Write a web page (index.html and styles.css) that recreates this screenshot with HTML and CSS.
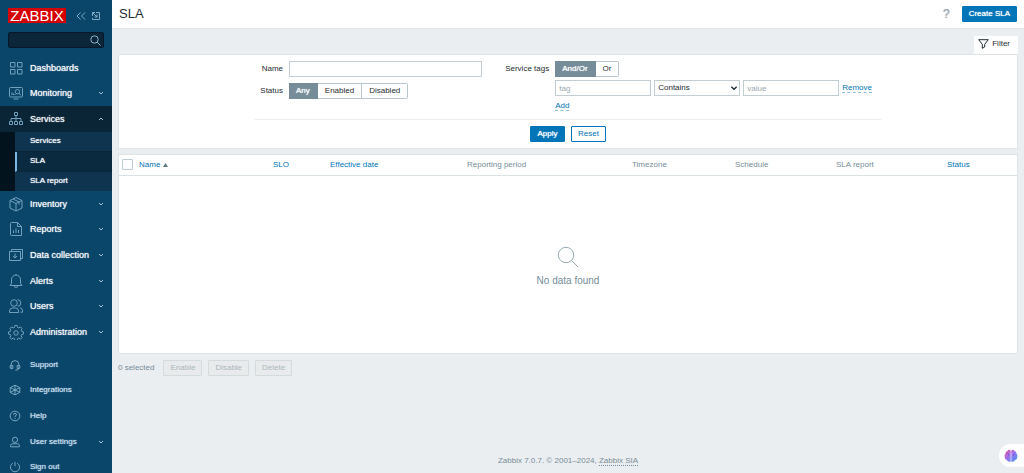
FILE: index.html
```html
<!DOCTYPE html>
<html lang="en">
<head>
<meta charset="utf-8">
<title>SLA</title>
<link rel="stylesheet" href="styles.css">
</head>
<body>
<svg class="sprite" aria-hidden="true">
  <symbol id="chevron" viewBox="0 0 6 6"><path d="M1 2l2 2 2-2"/></symbol>
</svg>
<div class="layout">
  <aside class="sidebar">
    <div class="brand">
      <a class="logo" href="#">ZABBIX</a>
      <button class="icon-btn" type="button" aria-label="Collapse sidebar"><svg width="10" height="10" viewBox="0 0 10 10"><path d="M4.500 1.500L1 5l3.500 3.500M9 1.500L5.500 5 9 8.500"/></svg></button>
      <button class="icon-btn" type="button" aria-label="Hide sidebar"><svg width="10" height="10" viewBox="0 0 10 10"><path d="M5 1.500h3.500v7h-7V7M1.500 5V1.500H4M1.500 1.500L6 6M6 3.500V6H3.500"/></svg></button>
    </div>
    <form class="search">
      <input type="text" aria-label="Search">
      <button class="search-btn" type="button" aria-label="Search"><svg width="11" height="11" viewBox="0 0 11 11"><circle cx="4.500" cy="4.500" r="3.700"/><path d="M7.200 7.200l3.300 3.300"/></svg></button>
    </form>
    <nav>
      <ul class="menu menu-top">
        <li><a href="#"><svg class="icon" viewBox="0 0 16 16"><path d="M2.500 2.500h4.500v4.500H2.500zM9.500 2.500H14v4.500H9.500zM2.500 9.500h4.500V14H2.500zM9.500 9.500H14V14H9.500z"/></svg><span>Dashboards</span></a></li>
        <li><a href="#"><svg class="icon" viewBox="0 0 16 16"><path d="M2.500 2.500h11q1 0 1 1v7.500q0 1-1 1h-11q-1 0-1-1V3.500q0-1 1-1zM5.500 14h5M4 10V7.500M5.500 10V8.500M7 10V9"/><circle cx="9.500" cy="6.700" r="2.200"/><path d="M11 8.500l2 1.700"/></svg><span>Monitoring</span><svg class="arrow"><use href="#chevron"/></svg></a></li>
        <li class="open"><a href="#"><svg class="icon" viewBox="0 0 16 16"><path d="M6.500 1.500h3v3h-3zM8 4.500v6M3 10.500V7.500h10v3M1.500 10.500h3v3h-3zM6.500 10.500h3v3h-3zM11.500 10.500h3v3h-3z"/></svg><span>Services</span><svg class="arrow up"><use href="#chevron"/></svg></a></li>
      </ul>
      <ul class="submenu">
        <li><a href="#">Services</a></li>
        <li class="selected"><a href="#">SLA</a></li>
        <li><a href="#">SLA report</a></li>
      </ul>
      <ul class="menu menu-main">
        <li><a href="#"><svg class="icon" viewBox="0 0 16 16"><path d="M8 1.500l6 3v7.500l-6 3-6-3V4.500zM2 4.500l6 3 6-3M8 7.500V15M5 3l6 3v2.500"/></svg><span>Inventory</span><svg class="arrow"><use href="#chevron"/></svg></a></li>
        <li><a href="#"><svg class="icon" viewBox="0 0 16 16"><path d="M3.500 1.500h6l4 4V14.500h-10q-1 0-1-1V2.500q0-1 1-1zM9.500 1.500v4h4M5.500 12V9.500M8 12V7.500M10.500 12V9"/></svg><span>Reports</span><svg class="arrow"><use href="#chevron"/></svg></a></li>
        <li><a href="#"><svg class="icon" viewBox="0 0 16 16"><path d="M1.500 4.500h11v9h-11zM3.500 4.500V2.500h11v9h-2M7 6.500v4.500M5 9l2 2 2-2"/></svg><span>Data collection</span><svg class="arrow"><use href="#chevron"/></svg></a></li>
        <li><a href="#"><svg class="icon" viewBox="0 0 16 16"><path d="M2 12.500l1.500-2V6.500a4.500 4.500 0 0 1 9 0v4l1.500 2zM6 12.500q.3 2 2 2t2-2M8 2V1"/></svg><span>Alerts</span><svg class="arrow"><use href="#chevron"/></svg></a></li>
        <li><a href="#"><svg class="icon" viewBox="0 0 16 16"><circle cx="6" cy="5" r="3.300"/><path d="M1.500 14.500v-1.500q0-3 3-3h3q3 0 3 3v1.500zM9.500 1.700a3.300 3.300 0 0 1 0 6.600M12 9.700q2.500.3 2.500 3v1.500h-2"/></svg><span>Users</span><svg class="arrow"><use href="#chevron"/></svg></a></li>
        <li><a href="#"><svg class="icon" viewBox="0 0 16 16"><path d="M6.900 1.500h2.200l.5 1.900 1.200.5 1.700-1 1.600 1.600-1 1.700.5 1.200 1.900.5v2.200l-1.900.5-.5 1.200 1 1.700-1.600 1.600-1.700-1-1.200.5-.5 1.900H6.900l-.5-1.900-1.200-.5-1.700 1-1.600-1.600 1-1.700-.5-1.200L.5 10.100V7.900l1.900-.5.5-1.200-1-1.700 1.600-1.600 1.700 1 1.200-.5z"/><circle cx="8" cy="9" r="2.200"/></svg><span>Administration</span><svg class="arrow"><use href="#chevron"/></svg></a></li>
      </ul>
      <ul class="menu menu-user">
        <li><a href="#"><svg class="icon" viewBox="0 0 16 16"><path d="M3.500 12V7.500a4.500 4.500 0 0 1 9 0V12M3.500 8.500h2V12h-2q-1 0-1-1V9.500q0-1 1-1M12.500 8.500h-2V12h2q1 0 1-1V9.500q0-1-1-1M12 12q0 2-3.500 2"/></svg><span>Support</span></a></li>
        <li><a href="#"><svg class="icon" viewBox="0 0 16 16"><path d="M8 2.500l5.500 2.800v5.400L8 13.500l-5.500-2.800V5.300zM2.500 5.300L8 8l5.500-2.700M8 8v5.500M8 2.500V8M2.500 10.700L8 8l5.500 2.700"/></svg><span>Integrations</span></a></li>
        <li><a href="#"><svg class="icon" viewBox="0 0 16 16"><circle cx="8" cy="8" r="5.500"/><path d="M6.300 6.700q0-1.700 1.700-1.700t1.700 1.500Q9.700 7.500 8 8.300v1M8 10.300v1.200"/></svg><span>Help</span></a></li>
        <li><a href="#"><svg class="icon" viewBox="0 0 16 16"><circle cx="8" cy="5.500" r="3"/><path d="M3 13.500V12q0-2 2.500-2h5q2.500 0 2.500 2v1.500z"/></svg><span>User settings</span><svg class="arrow"><use href="#chevron"/></svg></a></li>
        <li><a href="#"><svg class="icon" viewBox="0 0 16 16"><path d="M8 2v5M5.500 3.700a5.200 5.200 0 1 0 5 0"/></svg><span>Sign out</span></a></li>
      </ul>
    </nav>
  </aside>
  <div class="page">
    <header class="header">
      <h1>SLA</h1>
      <a class="help" href="#" aria-label="Help">?</a>
      <button class="btn primary" type="button">Create SLA</button>
    </header>
    <main>
      <div class="tabs">
        <a class="filter-tab" href="#"><svg width="11" height="10" viewBox="0 0 11 10"><path d="M.7.7h9.600L6.700 5.300V8L4.300 9.300v-4z"/></svg>Filter</a>
      </div>
      <form class="panel filter">
        <div class="fields">
          <div class="fields-left">
            <label for="name">Name</label>
            <input class="text" id="name" type="text">
            <span class="label" id="status-label">Status</span>
            <div class="segments" role="group" aria-labelledby="status-label">
              <button type="button" class="on">Any</button><button type="button">Enabled</button><button type="button">Disabled</button>
            </div>
          </div>
          <div class="fields-right">
            <span class="label" id="tags-label">Service tags</span>
            <div class="tags">
              <div class="segments" role="group" aria-labelledby="tags-label">
                <button type="button" class="on">And/Or</button><button type="button">Or</button>
              </div>
              <div class="tag-row">
                <input class="text" type="text" placeholder="tag" aria-label="tag">
                <div class="select">
                  <select aria-label="Operator"><option>Contains</option></select>
                  <svg viewBox="0 0 6 6"><path d="M1 2l2 2 2-2"/></svg>
                </div>
                <input class="text" type="text" placeholder="value" aria-label="value">
                <a class="dotted" href="#">Remove</a>
              </div>
              <a class="dotted add" href="#">Add</a>
            </div>
          </div>
        </div>
        <div class="actions">
          <button class="btn primary" type="button">Apply</button>
          <button class="btn" type="button">Reset</button>
        </div>
      </form>
      <div class="panel list">
        <table>
          <colgroup><col class="c-check"><col class="c-name"><col class="c-slo"><col class="c-date"><col class="c-period"><col class="c-zone"><col class="c-sched"><col class="c-report"><col class="c-status"></colgroup>
          <thead>
            <tr>
              <th class="check"><input type="checkbox" aria-label="Select all"></th>
              <th><a href="#">Name <svg class="sort" viewBox="0 0 5 4"><path d="M0 4l2.500-4L5 4z"/></svg></a></th>
              <th><a href="#">SLO</a></th>
              <th><a href="#">Effective date</a></th>
              <th>Reporting period</th>
              <th>Timezone</th>
              <th>Schedule</th>
              <th>SLA report</th>
              <th><a href="#">Status</a></th>
            </tr>
          </thead>
        </table>
        <div class="empty">
          <svg width="22" height="22" viewBox="0 0 22 22"><circle cx="9" cy="9" r="7.700"/><path d="M14.500 14.500l6.500 6.500"/></svg>
          <p>No data found</p>
        </div>
      </div>
      <div class="bulk">
        <span>0 selected</span>
        <button class="btn" type="button" disabled>Enable</button>
        <button class="btn" type="button" disabled>Disable</button>
        <button class="btn" type="button" disabled>Delete</button>
      </div>
    </main>
    <footer>Zabbix 7.0.7. © 2001–2024, <a href="#">Zabbix SIA</a></footer>
  </div>
</div>
<button class="assistant" type="button" aria-label="Assistant">
  <svg width="14" height="14" viewBox="0 0 14 14">
    <defs><linearGradient id="brain" x1="0" y1="0" x2="1" y2="1"><stop offset="0" stop-color="#f0509a"/><stop offset=".5" stop-color="#9a78f0"/><stop offset="1" stop-color="#38a0f4"/></linearGradient></defs>
    <path fill="url(#brain)" d="M6.700 1.500Q4.500 0 3.500 2 1.500 2 1.500 4.500 0 6 .7 8q0 2.500 2 3 1.300 2.500 4 1.500zM7.300 1.500Q9.500 0 10.500 2q2 0 2 2.500 1.500 1.500.8 3.500 0 2.500-2 3-1.300 2.500-4 1.500z"/>
    <path fill="none" stroke="#7a5ee6" d="M3 5h1.500v2M2.500 9h2M11 5H9.500v2M11.500 9h-2"/>
  </svg>
</button>
</body>
</html>
```

FILE: styles.css
```css
* { box-sizing: border-box; }
body {
  margin: 0;
  background: #ebeef0;
  color: #1f2c33;
  font: 8px/12px "Liberation Sans", Arial, sans-serif;
}
a { color: #0275b8; text-decoration: none; }
button, input, select { font: inherit; color: inherit; margin: 0; }
ul { list-style: none; margin: 0; padding: 0; }
svg { fill: none; stroke: currentColor; flex: none; }
.sprite { position: absolute; width: 0; height: 0; }
.layout { display: flex; height: 100vh; }

/* Sidebar */
.sidebar {
  flex: none;
  width: 112px;
  overflow: hidden;
  background: #0a466a;
}
.brand { display: flex; align-items: center; gap: 5px; padding: 8px 8px 0; }
.logo {
  width: 58px;
  margin-right: 5px;
  background: #d40000;
  color: #fff;
  font-size: 15px;
  line-height: 15px;
  text-align: center;
}
.icon-btn, .search-btn {
  display: flex;
  padding: 0;
  border: 0;
  background: none;
  color: #7fabc6;
}
.search {
  display: flex;
  align-items: center;
  height: 16px;
  margin: 9px 8px 7px;
  padding-right: 2px;
  border: 1px solid #06182a;
  border-radius: 2px;
  background: #0a2638;
}
.search input { flex: 1; min-width: 0; padding: 0 3px; border: 0; outline: 0; background: none; color: #fff; }
.search-btn { color: #8fb3c9; }
.menu { display: grid; grid-auto-rows: 1fr; }
.menu-top { height: 77px; }
.menu-main { height: 154px; }
.menu-user { height: 128px; margin-top: 7px; }
.menu a {
  display: flex;
  align-items: center;
  height: 100%;
  padding: 0 8px;
  color: #f4f8fa;
  font-size: 9px;
}
.menu span { flex: 1; margin-left: 6px; white-space: nowrap; text-shadow: 0 0 1px currentColor; }
.icon { width: 16px; height: 16px; color: #71a0bd; }
.arrow { width: 6px; height: 6px; color: #a5c2d4; }
.up { transform: rotate(180deg); }
.open { background: #0a2536; }
.menu-user a { color: #c3dcec; font-size: 8px; }
.menu-user .icon { width: 14px; height: 14px; color: #86b2cd; }
.menu-user span { margin-left: 8px; }
.submenu { padding-left: 15px; background: #03131e; }
.submenu li { border-bottom: 1px solid #0a2638; background: #0e3450; }
.submenu li:last-child { border-bottom: 0; }
.submenu .selected { background: #0a2a40; border-left: 2px solid #78b7e4; }
.submenu a { display: block; padding: 3px 0 4px 15px; color: #f4f8fa; text-shadow: 0 0 1px currentColor; }
.submenu .selected a { padding-left: 13px; }

/* Page */
.page { flex: 1; min-width: 0; display: flex; flex-direction: column; }
.header {
  display: flex;
  align-items: center;
  height: 29px;
  padding: 0 7px;
  background: #fff;
  border-bottom: 1px solid #e2e6e9;
}
h1 { flex: 1; margin: 0; font-size: 13px; font-weight: 400; line-height: 16px; }
.help { margin-right: 12px; color: #9aaab5; font-size: 12px; text-shadow: 0 0 1px currentColor; }
.btn {
  height: 16px;
  padding: 0 6px;
  border: 1px solid #0275b8;
  border-radius: 1px;
  background: #fff;
  color: #0275b8;
  line-height: 14px;
}
.primary { background: #0275b8; color: #fff; text-shadow: 0 0 1px currentColor; }
main { padding: 7px 6px 0; }
.tabs { display: flex; justify-content: flex-end; }
.filter-tab {
  display: flex;
  align-items: center;
  gap: 3px;
  height: 18px;
  padding: 0 8px 3px 4px;
  background: #fff;
  color: #1f2c33;
}
.panel { background: #fff; border: 1px solid #dfe4e7; }
.filter { display: flex; flex-direction: column; align-items: center; padding: 6px 0; margin-bottom: 5px; }
.fields {
  display: flex;
  justify-content: space-between;
  width: 626px;
  padding: 0 9px 7px 0;
  border-bottom: 1px solid #ebeef0;
}
.fields-left { display: grid; grid-template-columns: 28px 193px; gap: 6px; align-content: start; }
.fields-left > label, .label { line-height: 16px; text-align: right; }
.fields-right { display: flex; gap: 6px; }
.text {
  width: 96px;
  height: 16px;
  padding: 0 3px;
  border: 1px solid #c3ced4;
  border-radius: 0;
  background: #fff;
}
#name { width: 100%; }
.text::placeholder { color: #9aa7af; }
.segments { display: flex; }
.segments button {
  height: 16px;
  padding: 0 7px;
  border: 1px solid #b9c6ce;
  border-left-width: 0;
  background: #fff;
}
.segments .on { border-color: #768d99; background: #768d99; color: #fff; text-shadow: 0 0 1px currentColor; }
.segments button:last-child { border-radius: 0 2px 2px 0; }
.tag-row { display: flex; align-items: center; gap: 3px; margin: 3px 0 4px; }
.select { display: grid; align-items: center; width: 86px; }
.select > * { grid-area: 1 / 1; }
.select select {
  appearance: none;
  height: 16px;
  padding: 0 3px;
  border: 1px solid #c3ced4;
  border-radius: 0;
  background: #fff;
}
.select svg { justify-self: end; width: 8px; height: 8px; margin-right: 2px; pointer-events: none; }
.dotted { border-bottom: 1px dashed #8fc0de; line-height: 9px; }
.add { display: inline-block; }
.actions { display: flex; gap: 6px; padding-top: 6px; }
.actions .btn { min-width: 35px; }

.list { min-height: 200px; }
table { width: 100%; table-layout: fixed; border-collapse: collapse; }
.c-check { width: 17px; }
.c-name { width: 134px; }
.c-slo { width: 57px; }
.c-date { width: 137px; }
.c-period { width: 165px; }
.c-zone { width: 103px; }
.c-sched { width: 101px; }
.c-report { width: 111px; }
.c-status { width: 73px; }
th {
  height: 20px;
  padding: 0 3px;
  border-bottom: 1px solid #dbe3e5;
  color: #768d99;
  font-weight: 400;
  text-align: left;
  white-space: nowrap;
}
th input {
  appearance: none;
  display: block;
  width: 11px;
  height: 11px;
  border: 1px solid #bccad2;
  border-radius: 1px;
}
.sort { width: 5px; height: 4px; fill: #5f7683; stroke: none; }
.empty { display: flex; flex-direction: column; align-items: center; padding-top: 70px; color: #768d99; }
.empty svg { color: #97aab3; }
.empty p { margin: 7px 0 0; font-size: 10px; }
.bulk { display: flex; align-items: center; gap: 6px; margin-top: 6px; color: #768d99; }
.bulk span { margin-right: 3px; }
.bulk .btn { border-color: #d5dadd; background: #e8eaeb; color: #adb8bd; }
footer { margin-top: auto; padding-bottom: 6px; text-align: center; color: #768d99; }
footer a { color: inherit; border-bottom: 1px dotted #768d99; }

.assistant {
  position: fixed;
  right: 0;
  bottom: 6px;
  display: flex;
  align-items: center;
  width: 25px;
  height: 23px;
  padding: 0 0 0 5px;
  border: 0;
  border-radius: 12px 0 0 12px;
  background: #fff;
}
.assistant svg { stroke: none; }
```
